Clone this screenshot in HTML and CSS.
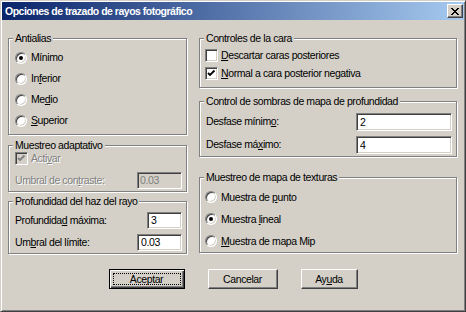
FILE: index.html
```html
<!DOCTYPE html>
<html>
<head>
    <meta charset="utf-8">
    <link rel="stylesheet" href="styles.css">
</head>
<body>
<div class="window">
    <div class="titlebar">
        <span class="title">Opciones de trazado de rayos fotográfico</span>
        <span class="close-btn">
            <svg width="8" height="7" viewBox="0 0 8 7" shape-rendering="crispEdges">
                <path d="M0 0h2v1h-2zM6 0h2v1h-2zM1 1h2v1h-2zM5 1h2v1h-2zM2 2h4v1h-4zM3 3h2v1h-2zM2 4h4v1h-4zM1 5h2v1h-2zM5 5h2v1h-2zM0 6h2v1h-2zM6 6h2v1h-2z" fill="#000"/>
            </svg>
        </span>
    </div>

    <div class="client">
        <div class="columns">
            <!-- Left column -->
            <div class="col col-left">
                <div class="group g-antialias">
                    <span class="legend">Antialias</span>
                    <div class="row r21"><span class="radio checked"></span><span class="lbl">Mínimo</span></div>
                    <div class="row r21"><span class="radio"></span><span class="lbl">In<u>f</u>erior</span></div>
                    <div class="row r21"><span class="radio"></span><span class="lbl">Me<u>d</u>io</span></div>
                    <div class="row r21"><span class="radio"></span><span class="lbl"><u>S</u>uperior</span></div>
                </div>

                <div class="group g-adapt">
                    <span class="legend">Muestreo adaptativo</span>
                    <div class="row r22">
                        <span class="check disabled">
                            <svg width="9" height="9" viewBox="0 0 9 9"><polyline points="1,4 3,6 7.5,1.5" fill="none" stroke="#808080" stroke-width="1.8"/></svg>
                        </span>
                        <span class="lbl disabled">Acti<u>v</u>ar</span>
                    </div>
                    <div class="row r22 field">
                        <span class="disabled">Umbral de con<u>t</u>raste:</span>
                        <span class="edit disabled w45">0.03</span>
                    </div>
                </div>

                <div class="group g-depth">
                    <span class="legend">Profundidad del haz del rayo</span>
                    <div class="row r22 field">
                        <span>Profundida<u>d</u> máxima:</span>
                        <span class="edit w35">3</span>
                    </div>
                    <div class="row r22 field">
                        <span>Um<u>b</u>ral del límite:</span>
                        <span class="edit w45">0.03</span>
                    </div>
                </div>
            </div>

            <!-- Right column -->
            <div class="col col-right">
                <div class="group g-faces">
                    <span class="legend">Controles de la cara</span>
                    <div class="row r18"><span class="check"></span><span class="lbl"><u>D</u>escartar caras posteriores</span></div>
                    <div class="row r18">
                        <span class="check">
                            <svg width="9" height="9" viewBox="0 0 9 9"><polyline points="1,4 3,6 7.5,1.5" fill="none" stroke="#000" stroke-width="1.8"/></svg>
                        </span>
                        <span class="lbl"><u>N</u>ormal a cara posterior negativa</span>
                    </div>
                </div>

                <div class="group g-shadow">
                    <span class="legend">Control de sombras de mapa de profundidad</span>
                    <div class="row r23 field">
                        <span>Desfase mínim<u>o</u>:</span>
                        <span class="edit wide">2</span>
                    </div>
                    <div class="row r23 field">
                        <span>Desfase má<u>x</u>imo:</span>
                        <span class="edit wide">4</span>
                    </div>
                </div>

                <div class="group g-tex">
                    <span class="legend">Muestreo de mapa de texturas</span>
                    <div class="row r22"><span class="radio"></span><span class="lbl">Muestra de <u>p</u>unto</span></div>
                    <div class="row r22"><span class="radio checked"></span><span class="lbl">Muestra <u>l</u>ineal</span></div>
                    <div class="row r22"><span class="radio"></span><span class="lbl"><u>M</u>uestra de mapa Mip</span></div>
                </div>
            </div>
        </div>

        <div class="buttons">
            <button class="btn default b-ok">Aceptar</button>
            <button class="btn b-cancel">Cancelar</button>
            <button class="btn b-help">Ay<u>u</u>da</button>
        </div>
    </div>
</div>
</body>
</html>
```

FILE: styles.css
```css
body {
    margin: 0;
    width: 466px;
    height: 312px;
    overflow: hidden;
    font-family: "Liberation Sans", Arial, sans-serif;
    font-size: 10.5px;
    letter-spacing: -0.4px;
    color: #000;
    background: #d4d0c8;
}
u {
    text-decoration: underline;
    text-underline-offset: 1px;
}

/* Window frame */
.window {
    box-sizing: border-box;
    width: 466px;
    height: 312px;
    border: 1px solid;
    border-color: #d4d0c8 #404040 #404040 #d4d0c8;
    box-shadow: inset 1px 1px #fff, inset -1px -1px #808080;
    padding: 1px;
    display: flex;
    flex-direction: column;
}
.titlebar {
    height: 18px;
    flex: none;
    display: flex;
    align-items: center;
    justify-content: space-between;
    padding: 0 1px 0 3px;
    background: linear-gradient(to right, #0a246a, #a6caf0);
}
.title {
    color: #fff;
    font-weight: bold;
    font-size: 10.5px;
    letter-spacing: -0.5px;
}
.close-btn {
    box-sizing: border-box;
    width: 16px;
    height: 14px;
    display: flex;
    align-items: center;
    justify-content: center;
    background: #d4d0c8;
    border: 1px solid;
    border-color: #fff #404040 #404040 #fff;
    box-shadow: inset -1px -1px #808080;
}

/* Client area */
.client {
    padding: 18px 0 0 6px;
}
.columns {
    display: flex;
    gap: 12px;
    align-items: flex-start;
}
.col-left {
    width: 179px;
}
.col-right {
    width: 258px;
}

/* Group box */
.group {
    position: relative;
    box-sizing: border-box;
    border: 1px solid #808080;
    box-shadow: inset 1px 1px #fff, 1px 1px #fff;
}
.legend {
    position: absolute;
    top: -7px;
    left: 4px;
    padding: 0 2px;
    line-height: 13px;
    background: #d4d0c8;
}
.col-left .group {
    padding-left: 6px;
    padding-right: 4px;
}
.col-right .group {
    padding-left: 5px;
    padding-right: 4px;
}
.g-antialias { padding-top: 8px; padding-bottom: 3px; }
.g-adapt { margin-top: 10px; padding-top: 1px; }
.g-depth { margin-top: 9px; padding-top: 7px; }
.g-faces { padding-top: 7px; padding-bottom: 5px; }
.g-shadow { margin-top: 13px; padding-top: 8px; }
.g-tex { margin-top: 20px; padding-top: 8px; }
.g-shadow .field > span:first-child { padding-left: 1px; }

.row {
    display: flex;
    align-items: center;
    line-height: 13px;
}
.r18 { height: 18px; }
.r21 { height: 21px; }
.r22 { height: 22px; }
.r23 { height: 23px; }
.field {
    justify-content: space-between;
}
.lbl {
    margin-left: 3px;
}
.disabled {
    color: #808080;
    text-shadow: 1px 1px #fff;
}

/* Radio button */
.radio {
    position: relative;
    box-sizing: border-box;
    width: 12px;
    height: 12px;
    margin-right: 1px;
    flex: none;
    border-radius: 50%;
    border: 1px solid;
    border-color: #808080 #fff #fff #808080;
    box-shadow: inset 1px 1px #404040, inset -1px -1px #d4d0c8;
    background: #fff;
}
.radio.checked::after {
    content: "";
    position: absolute;
    left: 3px;
    top: 3px;
    width: 4px;
    height: 4px;
    border-radius: 50%;
    background: #000;
}

/* Check box */
.check {
    box-sizing: border-box;
    width: 13px;
    height: 13px;
    flex: none;
    display: flex;
    align-items: center;
    justify-content: center;
    border: 1px solid;
    border-color: #808080 #fff #fff #808080;
    box-shadow: inset 1px 1px #404040, inset -1px -1px #d4d0c8;
    background: #fff;
}
.check.disabled {
    background: #d4d0c8;
    text-shadow: none;
}

/* Edit box */
.edit {
    box-sizing: border-box;
    height: 17px;
    padding: 0 3px;
    line-height: 13px;
    border: 1px solid;
    border-color: #808080 #fff #fff #808080;
    box-shadow: inset 1px 1px #404040, inset -1px -1px #d4d0c8;
    background: #fff;
    padding-top: 1px;
}
.edit.disabled {
    background: #d4d0c8;
    text-shadow: none;
    padding-left: 2px;
}
.w35 { width: 35px; }
.w45 { width: 45px; }
.wide {
    width: 96px;
    height: 18px;
    padding-top: 2px;
}

/* Buttons */
.buttons {
    display: flex;
    justify-content: center;
    gap: 23px;
    margin-top: 15px;
    padding-right: 6px;
}
.btn {
    position: relative;
    box-sizing: border-box;
    height: 20px;
    padding: 0;
    font: inherit;
    letter-spacing: inherit;
    color: #000;
    background: #d4d0c8;
    border: 1px solid;
    border-color: #fff #404040 #404040 #fff;
    box-shadow: inset -1px -1px #808080, inset 1px 1px #d4d0c8;
}
.btn.default {
    border: 1px solid #000;
    box-shadow: inset 1px 1px #fff, inset -1px -1px #404040, inset -2px -2px #808080;
}
.btn.default::after {
    content: "";
    position: absolute;
    left: 3px;
    top: 3px;
    right: 3px;
    bottom: 3px;
    border: 1px dotted #000;
}
.b-ok { width: 76px; }
.b-cancel { width: 70px; }
.b-help { width: 57px; }
```
